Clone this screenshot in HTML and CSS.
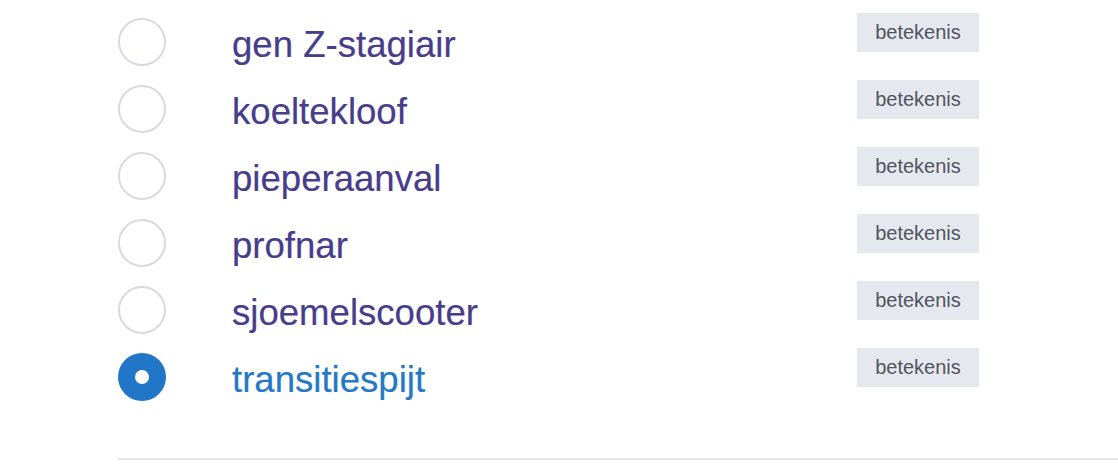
FILE: index.html
```html
<!DOCTYPE html>
<html>
<head>
<meta charset="utf-8">
<link rel="stylesheet" href="styles.css">
</head>
<body>
<div class="list">
  <div class="row"><span class="radio"></span><span class="word">gen Z-stagiair</span><span class="badge">betekenis</span></div>
  <div class="row"><span class="radio"></span><span class="word">koeltekloof</span><span class="badge">betekenis</span></div>
  <div class="row"><span class="radio"></span><span class="word">pieperaanval</span><span class="badge">betekenis</span></div>
  <div class="row"><span class="radio"></span><span class="word">profnar</span><span class="badge">betekenis</span></div>
  <div class="row"><span class="radio"></span><span class="word">sjoemelscooter</span><span class="badge">betekenis</span></div>
  <div class="row selected"><span class="radio"></span><span class="word">transitiespijt</span><span class="badge">betekenis</span></div>
</div>
<div class="rule"></div>
</body>
</html>
```
FILE: styles.css
```css
html, body {
  margin: 0;
  padding: 0;
  background: #ffffff;
}
body {
  font-family: "Liberation Sans", Arial, Helvetica, sans-serif;
  width: 1118px;
  height: 468px;
  overflow: hidden;
}
.list {
  padding: 8px 139px 0 118px;
  display: flex;
  flex-direction: column;
}
.row {
  height: 67px;
  display: flex;
  align-items: center;
}
.radio {
  flex: none;
  width: 48px;
  height: 48px;
  box-sizing: border-box;
  border: 2px solid #d9d9e2;
  border-radius: 50%;
  display: flex;
  align-items: center;
  justify-content: center;
}
.word {
  flex: 1;
  margin-left: 66px;
  padding-top: 6px;
  font-size: 36.6px;
  color: #483d8b;
  -webkit-text-stroke: 0.2px currentColor;
}
.badge {
  flex: none;
  align-self: flex-start;
  margin-top: 5px;
  width: 122px;
  height: 39px;
  box-sizing: border-box;
  background: #e6e8ef;
  color: #50545e;
  font-size: 20px;
  display: flex;
  align-items: center;
  justify-content: center;
}
.selected .radio {
  border: none;
  background: #2176c8;
}
.selected .radio::after {
  content: "";
  width: 14px;
  height: 14px;
  border-radius: 50%;
  background: #ffffff;
}
.selected .word {
  color: #2479c7;
}
.rule {
  margin: 48px 0 0 118px;
  height: 2px;
  background: #e5e5ea;
}
```
